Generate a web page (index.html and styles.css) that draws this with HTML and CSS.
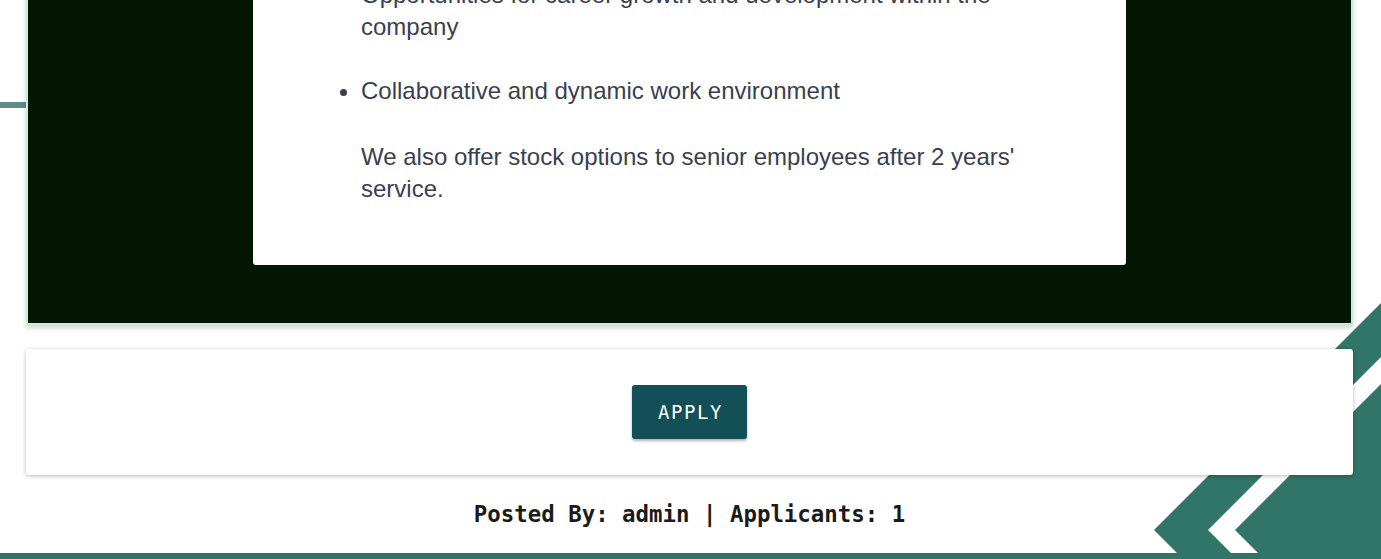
FILE: index.html
```html
<!DOCTYPE html>
<html lang="en">
<head>
<meta charset="utf-8">
<title>Job details</title>
<link rel="stylesheet" href="styles.css">
</head>
<body>
<div class="decor" aria-hidden="true">
  <span class="decor-bar"></span>
  <svg class="decor-chevrons" viewBox="1100 280 281 279" width="281" height="279">
    <polygon fill="#317468" points="1381,303 1154,530 1190,566 1381,566"/>
    <polygon fill="#ffffff" points="1381,357 1208,530 1244,566 1271,566 1235,530 1381,384"/>
  </svg>
</div>
<main class="page">
  <section class="job-panel">
    <div class="job-body">
      <ul class="perks">
        <li>Opportunities for career growth and development within the company</li>
        <li>Collaborative and dynamic work environment
          <p class="perks-note">We also offer stock options to senior employees after 2 years' service.</p>
        </li>
      </ul>
    </div>
  </section>
  <section class="apply-card">
    <button class="apply-btn" type="button">APPLY</button>
  </section>
  <p class="meta">Posted By: admin | Applicants: 1</p>
</main>
<footer class="site-footer"></footer>
</body>
</html>
```

FILE: styles.css
```css
html, body {
  margin: 0;
  padding: 0;
  background: #ffffff;
  overflow: hidden;
}

body {
  position: relative;
  height: 559px;
  font-family: "Liberation Sans", Arial, sans-serif;
}

.decor {
  position: absolute;
  inset: 0;
  z-index: 0;
  pointer-events: none;
}

.decor-bar {
  position: absolute;
  left: 0;
  top: 102px;
  width: 30px;
  height: 6px;
  background: #5c8c87;
}

.decor-chevrons {
  position: absolute;
  right: 0;
  top: 280px;
  display: block;
}

.page {
  position: relative;
  z-index: 1;
  margin: -121px 28px 0 26px;
  display: flex;
  flex-direction: column;
}

.job-panel {
  background: #021602;
  border: 2px solid #c6f0d6;
  padding: 58px 0;
  display: flex;
  justify-content: center;
  box-shadow: 0 3px 5px rgba(0, 0, 0, 0.18);
}

.job-body {
  width: 873px;
  box-sizing: border-box;
  background: #ffffff;
  border-radius: 3px;
  padding: 40px 68px 60px;
}

.perks {
  margin: 0;
  padding-left: 40px;
  color: #3a3f50;
  font-size: 24px;
  line-height: 32px;
}

.perks li + li {
  margin-top: 32px;
}

.perks-note {
  margin: 34px 0 0;
}

.apply-card {
  margin-top: 24px;
  background: #ffffff;
  border-radius: 3px;
  padding: 36px 0;
  display: flex;
  justify-content: center;
  box-shadow: 0 1px 4px rgba(0, 0, 0, 0.28);
}

.apply-btn {
  height: 54px;
  width: 115px;
  padding: 0 0 0 2px;
  border: 0;
  border-radius: 3px;
  background: #124f57;
  color: #ffffff;
  font-family: "DejaVu Sans Mono", "Liberation Mono", monospace;
  font-size: 19px;
  letter-spacing: 1.6px;
  box-shadow: 0 2px 3px rgba(0, 0, 0, 0.3);
}

.meta {
  margin: 23px 0 23px;
  text-align: center;
  font-family: "DejaVu Sans Mono", "Liberation Mono", monospace;
  font-weight: bold;
  font-size: 22.4px;
  line-height: 32px;
  color: #1a1a1a;
}

.site-footer {
  position: relative;
  z-index: 1;
  height: 6px;
  background: #317468;
}
```
